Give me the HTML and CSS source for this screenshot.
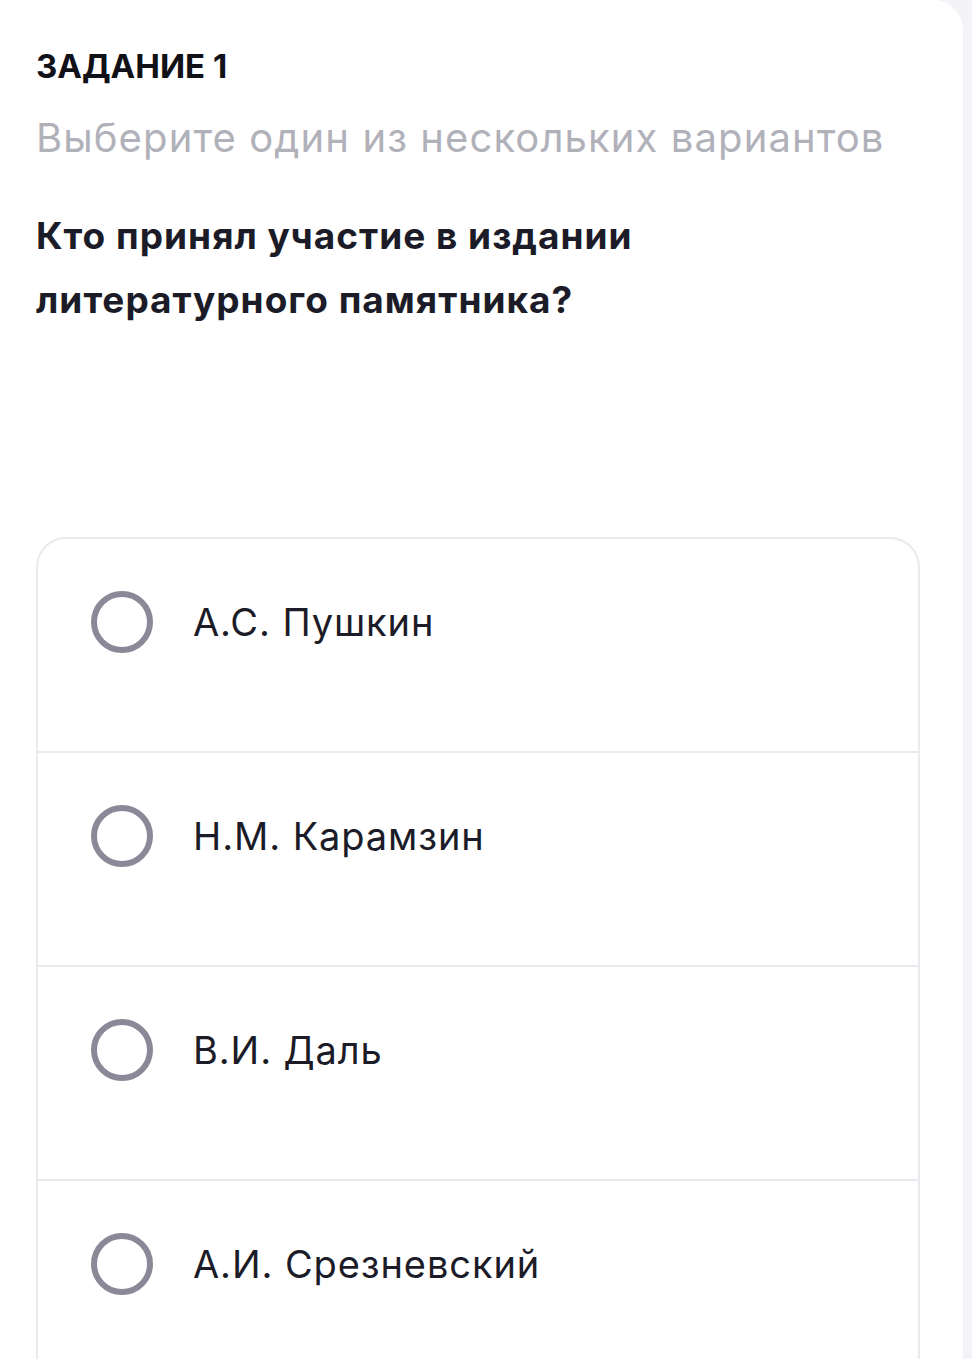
FILE: index.html
```html
<!DOCTYPE html>
<html lang="ru">
	<head>
		<meta charset="UTF-8" />
		<meta name="viewport" content="width=device-width, initial-scale=1.0" />
		<title>Задание 1</title>
		<link rel="stylesheet" href="styles.css">
	</head>
	<body>
		<div class="card">
			<h2 class="task-title">ЗАДАНИЕ 1</h2>
			<div class="task-hint">Выберите один из нескольких вариантов</div>
			<p class="question">Кто принял участие в издании литературного памятника?</p>

			<div class="options">
				<label class="option">
					<span class="radio"></span>
					<span class="option-text">А.С. Пушкин</span>
				</label>
				<label class="option">
					<span class="radio"></span>
					<span class="option-text">Н.М. Карамзин</span>
				</label>
				<label class="option">
					<span class="radio"></span>
					<span class="option-text">В.И. Даль</span>
				</label>
				<label class="option">
					<span class="radio"></span>
					<span class="option-text">А.И. Срезневский</span>
				</label>
			</div>
		</div>
	</body>
</html>
```

FILE: styles.css
```css
body {
	margin: 0;
	overflow: hidden;
	background-color: #f3f3f8;
	font-family: Inter, "Noto Sans", sans-serif;
	color: #1c1c28;
}
.card {
	width: 963px;
	min-height: 1359px;
	box-sizing: border-box;
	background-color: #fff;
	border-radius: 0 30px 0 0;
	padding: 44px 0 0 36px;
}
.task-title {
	margin: 0;
	font-size: 33px;
	font-weight: 700;
	line-height: 44px;
	color: #111118;
}
.task-hint {
	margin-top: 26px;
	font-size: 40px;
	letter-spacing: 1.1px;
	line-height: 48px;
	color: #b1b1ba;
}
.question {
	margin: 42px 0 0;
	width: 680px;
	font-size: 37px;
	font-weight: 700;
	letter-spacing: 1px;
	line-height: 64px;
	color: #1c1c28;
}
.options {
	margin-top: 205px;
	width: 880px;
	border: 2px solid #e9e9ee;
	border-radius: 30px 30px 0 0;
	border-bottom: none;
}
.option {
	display: flex;
	align-items: center;
	height: 214px;
	box-sizing: border-box;
	padding: 52px 0 98px 53px;
	border-top: 2px solid #e9e9ee;
	cursor: pointer;
}
.option:first-child {
	border-top: none;
	height: 212px;
}
.radio {
	width: 62px;
	height: 62px;
	box-sizing: border-box;
	border: 6px solid #8b8898;
	border-radius: 50%;
	flex-shrink: 0;
}
.option-text {
	margin-left: 40px;
	font-size: 38px;
	letter-spacing: 0.9px;
	color: #1c1c28;
}
```
